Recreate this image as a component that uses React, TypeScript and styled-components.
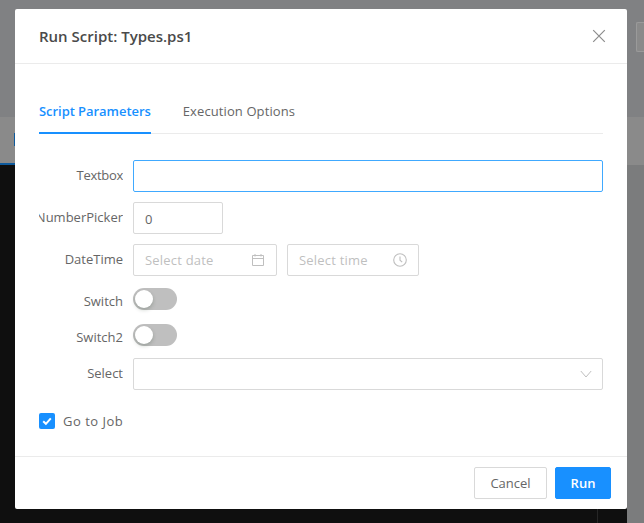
import styled, { createGlobalStyle } from 'styled-components';

const GlobalStyle = createGlobalStyle`
  html, body {
    margin: 0;
    padding: 0;
    height: 523px;
    overflow: hidden;
    background: #808183;
  }
  * {
    box-sizing: border-box;
  }
`;

const FIELD_FONT = `'Open Sans', 'Liberation Sans', sans-serif`;

const App = () => {
  return (
    <>
      <GlobalStyle />
      <Page>
        <TopBar>
          <TopButton />
        </TopBar>
        <TabStrip>
          <ActiveTab>
            <TabMark />
          </ActiveTab>
        </TabStrip>
        <MainArea>
          <DarkPane>
            <PaneDivider />
          </DarkPane>
        </MainArea>
      </Page>
      <Modal>
        <ModalHeader>
          <ModalTitle>Run Script: Types.ps1</ModalTitle>
          <CloseButton aria-label="Close">
            <svg width="14" height="14" viewBox="0 0 14 14" fill="none" stroke="#8c8c8c" strokeWidth="1.2">
              <path d="M1.2 1.2l11.6 11.6M12.8 1.2L1.2 12.8" />
            </svg>
          </CloseButton>
        </ModalHeader>
        <ModalBody>
          <Tabs>
            <Tab $active>Script Parameters</Tab>
            <Tab>Execution Options</Tab>
          </Tabs>
          <Form>
            <FormRow $height={32} $top={0}>
              <FieldLabel $spacing={-0.3}>Textbox</FieldLabel>
              <TextInput $focused />
            </FormRow>
            <FormRow $height={32} $top={10}>
              <FieldLabel>NumberPicker</FieldLabel>
              <NumberBox>0</NumberBox>
            </FormRow>
            <FormRow $height={32} $top={10}>
              <FieldLabel>DateTime</FieldLabel>
              <PickerRow>
                <PickerBox $width={144}>
                  <Placeholder>Select date</Placeholder>
                  <svg width="14" height="14" viewBox="0 0 14 14" fill="none" stroke="#bfbfbf" strokeWidth="1">
                    <path d="M1.5 2.5h11v10h-11zM1.5 5.5h11M4 1v2.5M10 1v2.5" />
                  </svg>
                </PickerBox>
                <PickerBox $width={132}>
                  <Placeholder>Select time</Placeholder>
                  <svg width="14" height="14" viewBox="0 0 14 14" fill="none" stroke="#bfbfbf" strokeWidth="1.1">
                    <circle cx="7" cy="7" r="6.3" />
                    <path d="M7 3.5V7.2l2.2 2" />
                  </svg>
                </PickerBox>
              </PickerRow>
            </FormRow>
            <FormRow $height={22} $top={12} $switchRow>
              <FieldLabel>Switch</FieldLabel>
              <Switch>
                <SwitchKnob />
              </Switch>
            </FormRow>
            <FormRow $height={22} $top={14} $switchRow>
              <FieldLabel>Switch2</FieldLabel>
              <Switch>
                <SwitchKnob />
              </Switch>
            </FormRow>
            <FormRow $height={32} $top={12}>
              <FieldLabel>Select</FieldLabel>
              <SelectBox>
                <svg width="12" height="12" viewBox="0 0 12 12" fill="none" stroke="#bfbfbf" strokeWidth="1">
                  <path d="M0.8 3l5.2 6 5.2-6" />
                </svg>
              </SelectBox>
            </FormRow>
          </Form>
          <CheckRow>
            <CheckBox>
              <svg width="12" height="12" viewBox="0 0 12 12" fill="none" stroke="#fff" strokeWidth="2">
                <path d="M2.2 6.2l2.7 2.6 4.9-5.4" />
              </svg>
            </CheckBox>
            <CheckLabel>Go to Job</CheckLabel>
          </CheckRow>
        </ModalBody>
        <ModalFooter>
          <Button>Cancel</Button>
          <Button $primary>Run</Button>
        </ModalFooter>
      </Modal>
    </>
  );
};

export default App;

const Page = styled.div`
  display: flex;
  flex-direction: column;
  width: 644px;
  height: 523px;
`;

const TopBar = styled.div`
  display: flex;
  justify-content: flex-end;
  height: 117px;
  padding: 22px 0 0 0;
  background: #808183;
`;

const TopButton = styled.div`
  width: 8px;
  height: 30px;
  border: 1px solid #9a9a9a;
  border-right: 0;
  border-radius: 2px 0 0 2px;
  background: #8a8a8a;
`;

const TabStrip = styled.div`
  display: flex;
  height: 48px;
  background: #8a8a8a;
`;

const ActiveTab = styled.div`
  display: flex;
  align-items: center;
  width: 100px;
  padding: 0 0 0 14px;
  border-bottom: 2px solid #0e5a9c;
`;

const TabMark = styled.div`
  width: 10px;
  height: 13px;
  margin-bottom: 2px;
  background: #0e5a9c;
`;

const MainArea = styled.div`
  display: flex;
  flex: 1;
  background: #7b7c7d;
`;

const DarkPane = styled.div`
  display: flex;
  justify-content: flex-end;
  width: 627px;
  background: #0f0f0f;
`;

const PaneDivider = styled.div`
  width: 1px;
  height: 100%;
  margin-right: 29px;
  background: #262626;
`;

const Modal = styled.div`
  position: absolute;
  top: 9px;
  left: 15px;
  display: flex;
  flex-direction: column;
  width: 612px;
  height: 500px;
  background: #fff;
  border-radius: 2px;
  font-family: ${FIELD_FONT};
`;

const ModalHeader = styled.div`
  display: flex;
  align-items: center;
  justify-content: space-between;
  height: 55px;
  padding: 0 21px 0 24px;
  border-bottom: 1px solid #ebebeb;
`;

const ModalTitle = styled.div`
  font-size: 15px;
  font-weight: 600;
  color: #4a4a4a;
`;

const CloseButton = styled.div`
  display: flex;
`;

const ModalBody = styled.div`
  flex: 1;
  padding: 24px 24px 0;
`;

const Tabs = styled.div`
  display: flex;
  gap: 32px;
  height: 46px;
  border-bottom: 1px solid #ebebeb;
`;

const Tab = styled.div<{ $active?: boolean }>`
  height: 46px;
  padding-top: 14px;
  font-size: 13px;
  line-height: 18px;
  font-weight: ${({ $active }) => ($active ? 600 : 400)};
  letter-spacing: ${({ $active }) => ($active ? -0.05 : 0.1)}px;
  color: ${({ $active }) => ($active ? '#1890ff' : '#666')};
  border-bottom: 2px solid ${({ $active }) => ($active ? '#1890ff' : 'transparent')};
`;

const Form = styled.div`
  display: flex;
  flex-direction: column;
  padding-top: 26px;
`;

const FormRow = styled.div<{ $height: number; $top: number; $switchRow?: boolean }>`
  display: flex;
  align-items: center;
  gap: 10px;
  height: ${({ $height }) => $height}px;
  margin-top: ${({ $top }) => $top}px;

  & > :first-child {
    padding: ${({ $switchRow }) => ($switchRow ? '4px 0 0' : '0 0 2px')};
  }
`;

const FieldLabel = styled.div<{ $spacing?: number }>`
  flex: none;
  width: 84px;
  overflow: hidden;
  font-size: 13px;
  letter-spacing: ${({ $spacing }) => $spacing ?? 0}px;
  color: #666;
  text-align: right;
  white-space: nowrap;
  direction: rtl;
`;

const TextInput = styled.div<{ $focused?: boolean }>`
  width: 470px;
  height: 32px;
  border: 1px solid ${({ $focused }) => ($focused ? '#40a9ff' : '#d9d9d9')};
  border-radius: 2px;
`;

const NumberBox = styled.div`
  width: 90px;
  height: 32px;
  padding: 0 11px;
  font-size: 13px;
  line-height: 32px;
  color: #666;
  border: 1px solid #d9d9d9;
  border-radius: 2px;
`;

const PickerRow = styled.div`
  display: flex;
  gap: 10px;
`;

const PickerBox = styled.div<{ $width: number }>`
  display: flex;
  align-items: center;
  justify-content: space-between;
  width: ${({ $width }) => $width}px;
  height: 32px;
  padding: 0 11px;
  border: 1px solid #d9d9d9;
  border-radius: 2px;
`;

const Placeholder = styled.span`
  font-size: 13px;
  letter-spacing: 0.2px;
  color: #bfbfbf;
`;

const Switch = styled.div`
  position: relative;
  width: 44px;
  height: 22px;
  background: #bfbfbf;
  border-radius: 11px;
`;

const SwitchKnob = styled.div`
  position: absolute;
  top: 2px;
  left: 2px;
  width: 18px;
  height: 18px;
  background: #fff;
  border-radius: 50%;
  box-shadow: 0 2px 4px rgba(0, 35, 11, 0.2);
`;

const SelectBox = styled.div`
  display: flex;
  align-items: center;
  justify-content: flex-end;
  width: 470px;
  height: 32px;
  padding: 0 10px;
  border: 1px solid #d9d9d9;
  border-radius: 2px;
`;

const CheckRow = styled.div`
  display: flex;
  align-items: center;
  gap: 8px;
  margin-top: 22px;
  height: 18px;
`;

const CheckBox = styled.div`
  display: flex;
  align-items: center;
  justify-content: center;
  width: 16px;
  height: 16px;
  background: #1890ff;
  border-radius: 2px;
`;

const CheckLabel = styled.span`
  font-size: 13px;
  letter-spacing: 0.5px;
  color: #666;
`;

const ModalFooter = styled.div`
  display: flex;
  justify-content: flex-end;
  gap: 8px;
  height: 53px;
  padding: 10px 16px;
  border-top: 1px solid #ebebeb;
`;

const Button = styled.div<{ $primary?: boolean }>`
  display: flex;
  align-items: center;
  justify-content: center;
  width: ${({ $primary }) => ($primary ? 56 : 73)}px;
  height: 32px;
  font-size: 13px;
  font-weight: ${({ $primary }) => ($primary ? 600 : 400)};
  color: ${({ $primary }) => ($primary ? '#fff' : '#666')};
  background: ${({ $primary }) => ($primary ? '#1890ff' : '#fff')};
  border: 1px solid ${({ $primary }) => ($primary ? '#1890ff' : '#d9d9d9')};
  border-radius: 2px;
`;
